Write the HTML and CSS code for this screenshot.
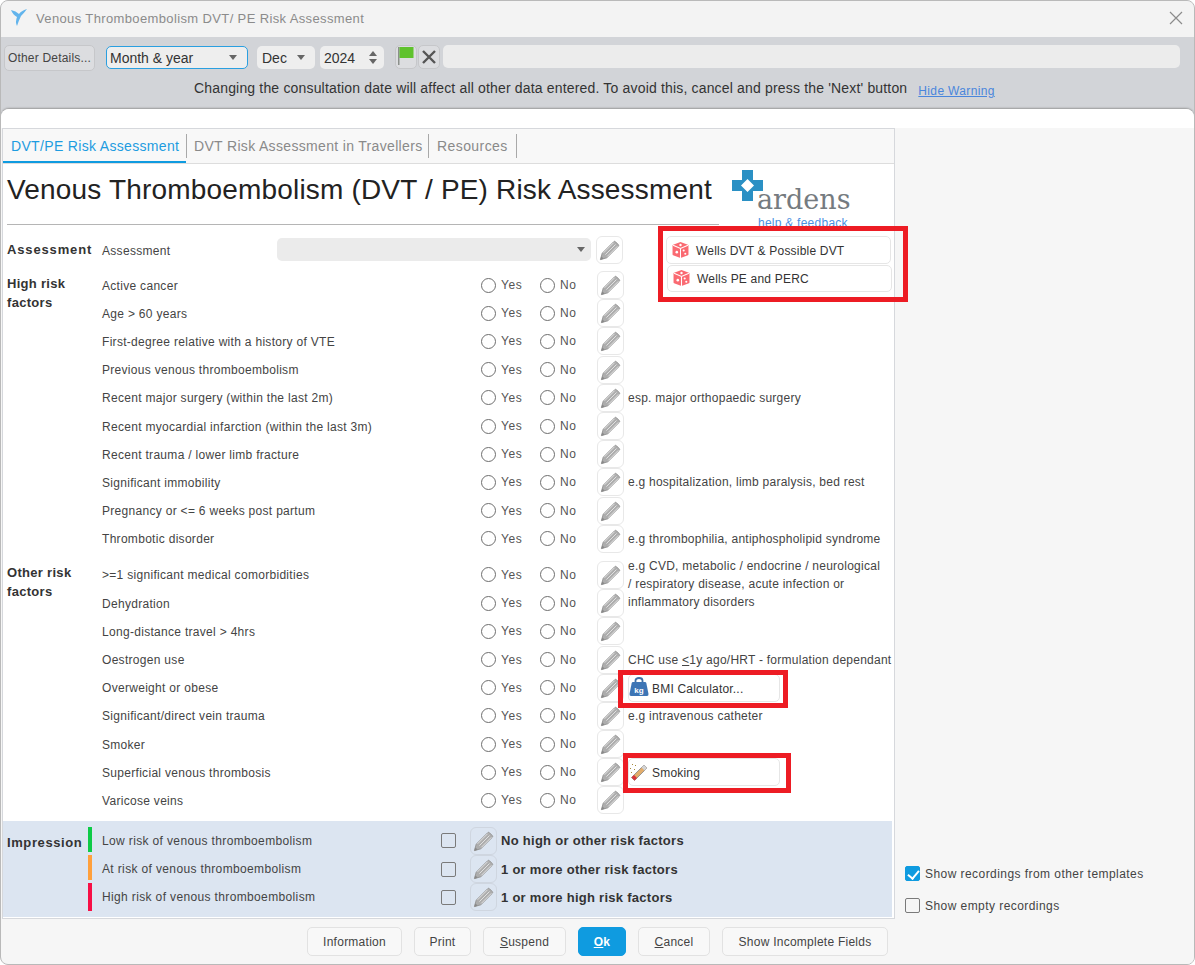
FILE: index.html
```html
<!DOCTYPE html>
<html lang="en">
<head>
    <meta charset="UTF-8">
    <title>Venous Thromboembolism DVT/ PE Risk Assessment</title>
    <link rel="stylesheet" href="styles.css">
</head>
<body>
    <svg class="defs" width="0" height="0">
        <symbol id="pencil" viewBox="0 0 24 24">
            <path d="M1.5 22.5 L3.5 15.5 L16 3 Q17 2 18 3 L21 6 Q22 7 21 8 L8.5 20.5 Z" fill="#adadad" stroke="#949494" stroke-width="1"/>
            <path d="M5 15 L16 4 M7 17 L18 6 M9 19 L20 8" stroke="#e6e6e6" stroke-width="1" fill="none"/>
            <path d="M1.5 22.5 L2.5 18.8 L5.2 21.5 Z" fill="#8a8a8a"/>
        </symbol>
        <symbol id="dice" viewBox="0 0 16 16">
            <path d="M8 .5 L15 3 Q15.5 3.2 15.5 4 V12 Q15.5 12.8 15 13 L8 15.5 L1 13 Q.5 12.8 .5 12 V4 Q.5 3.2 1 3 Z" fill="#fa6a72"/>
            <path d="M1 3.5 L8 6.5 L15 3.5 M8 6.5 V15.5" stroke="#fff" stroke-width="1" fill="none"/>
            <circle cx="4.5" cy="10" r="1.2" fill="#fff"/>
            <circle cx="11" cy="8.5" r="1" fill="#fff"/>
            <circle cx="12.5" cy="11.5" r="1" fill="#fff"/>
            <circle cx="8" cy="3.3" r="1.1" fill="#fff"/>
        </symbol>
    </svg>

    <div class="window">
        <!-- title bar -->
        <div class="titlebar">
            <svg class="app-icon" width="18" height="20" viewBox="0 0 18 20">
                <path d="M1 2 Q6 3 9 6 Q11 3 17 1 Q14 5 11 8 Q9 12 7 18 Q5 14 7 9 Q3 7 1 2 Z" fill="#62b4ec"/>
            </svg>
            <span class="title">Venous Thromboembolism DVT/ PE Risk Assessment</span>
            <svg class="close" width="14" height="14" viewBox="0 0 14 14">
                <path d="M1 1 L13 13 M13 1 L1 13" stroke="#8b8b8b" stroke-width="1.2"/>
            </svg>
        </div>

        <!-- date toolbar -->
        <div class="toolbar">
            <div class="tool-row">
                <button class="other-btn">Other Details...</button>
                <div class="drop month">Month &amp; year<i class="caret"></i></div>
                <div class="drop dec">Dec<i class="caret"></i></div>
                <div class="drop year">2024
                    <span class="spin"><i class="spin-up"></i><i class="spin-down"></i></span>
                </div>
                <button class="icon-btn flag">
                    <svg width="16" height="18" viewBox="0 0 16 18">
                        <rect x="0" y="0" width="1.5" height="18" fill="#8a8f8a"/>
                        <rect x="1.5" y="0" width="14" height="11" fill="#5fc22d"/>
                    </svg>
                </button>
                <button class="icon-btn cross">
                    <svg width="14" height="14" viewBox="0 0 14 14">
                        <path d="M1 1 L13 13 M13 1 L1 13" stroke="#555" stroke-width="2.4"/>
                    </svg>
                </button>
                <div class="date-text"></div>
            </div>
            <div class="warn-row">
                <span class="warn">Changing the consultation date will affect all other data entered. To avoid this, cancel and press the 'Next' button</span>
                <a class="hide-warn">Hide Warning</a>
            </div>
        </div>

        <div class="content">
            <div class="strip"></div>
            <div class="columns">
                <div class="left-col">
                    <div class="panel">
                        <div class="tabs">
                            <span class="tab tab-active">DVT/PE Risk Assessment</span>
                            <span class="tab tab-two">DVT Risk Assessment in Travellers</span>
                            <span class="tab tab-three">Resources</span>
                        </div>

                        <div class="head">
                            <h1>Venous Thromboembolism (DVT / PE) Risk Assessment</h1>
                            <div class="logo">
                                <svg class="logo-cross" width="33" height="33" viewBox="0 0 33 33">
                                    <path d="M11 1 H22 V11 H32 V22 H22 V32 H11 V22 H1 V11 H11 Z M10 16.5 L16.5 23 L23 16.5 L16.5 10 Z" fill="#2a90c4" fill-rule="evenodd"/>
                                </svg>
                                <span class="logo-word">ardens</span>
                                <span class="logo-help">help &amp; feedback</span>
                            </div>
                        </div>

                        <!-- assessment -->
                        <div class="section sec-assess">
                            <div class="sec-label assess-label">Assessment</div>
                            <div class="rows">
                                <div class="row">
                                    <span class="row-label assess-name">Assessment</span>
                                    <div class="assess-drop"><i class="caret"></i></div>
                                    <button class="pencil"><svg width="22" height="22"><use href="#pencil"/></svg></button>
                                    <button class="side-btn wells"><svg width="17" height="18"><use href="#dice"/></svg>Wells DVT &amp; Possible DVT</button>
                                </div>
                            </div>
                        </div>

                        <!-- high risk -->
                        <div class="section sec-high">
                            <div class="sec-label">High risk<br>factors</div>
                            <div class="rows">
                                <div class="row">
                                    <span class="row-label">Active cancer</span>
                                    <label class="opt"><input type="radio" name="h1">Yes</label>
                                    <label class="opt opt-no"><input type="radio" name="h1">No</label>
                                    <button class="pencil"><svg width="22" height="22"><use href="#pencil"/></svg></button>
                                    <button class="side-btn wells wells-two"><svg width="17" height="18"><use href="#dice"/></svg>Wells PE and PERC</button>
                                </div>
                                <div class="row">
                                    <span class="row-label">Age &gt; 60 years</span>
                                    <label class="opt"><input type="radio" name="h2">Yes</label>
                                    <label class="opt opt-no"><input type="radio" name="h2">No</label>
                                    <button class="pencil"><svg width="22" height="22"><use href="#pencil"/></svg></button>
                                </div>
                                <div class="row">
                                    <span class="row-label">First-degree relative with a history of VTE</span>
                                    <label class="opt"><input type="radio" name="h3">Yes</label>
                                    <label class="opt opt-no"><input type="radio" name="h3">No</label>
                                    <button class="pencil"><svg width="22" height="22"><use href="#pencil"/></svg></button>
                                </div>
                                <div class="row">
                                    <span class="row-label">Previous venous thromboembolism</span>
                                    <label class="opt"><input type="radio" name="h4">Yes</label>
                                    <label class="opt opt-no"><input type="radio" name="h4">No</label>
                                    <button class="pencil"><svg width="22" height="22"><use href="#pencil"/></svg></button>
                                </div>
                                <div class="row">
                                    <span class="row-label">Recent major surgery (within the last 2m)</span>
                                    <label class="opt"><input type="radio" name="h5">Yes</label>
                                    <label class="opt opt-no"><input type="radio" name="h5">No</label>
                                    <button class="pencil"><svg width="22" height="22"><use href="#pencil"/></svg></button>
                                    <span class="note">esp. major orthopaedic surgery</span>
                                </div>
                                <div class="row">
                                    <span class="row-label">Recent myocardial infarction (within the last 3m)</span>
                                    <label class="opt"><input type="radio" name="h6">Yes</label>
                                    <label class="opt opt-no"><input type="radio" name="h6">No</label>
                                    <button class="pencil"><svg width="22" height="22"><use href="#pencil"/></svg></button>
                                </div>
                                <div class="row">
                                    <span class="row-label">Recent trauma / lower limb fracture</span>
                                    <label class="opt"><input type="radio" name="h7">Yes</label>
                                    <label class="opt opt-no"><input type="radio" name="h7">No</label>
                                    <button class="pencil"><svg width="22" height="22"><use href="#pencil"/></svg></button>
                                </div>
                                <div class="row">
                                    <span class="row-label">Significant immobility</span>
                                    <label class="opt"><input type="radio" name="h8">Yes</label>
                                    <label class="opt opt-no"><input type="radio" name="h8">No</label>
                                    <button class="pencil"><svg width="22" height="22"><use href="#pencil"/></svg></button>
                                    <span class="note">e.g hospitalization, limb paralysis, bed rest</span>
                                </div>
                                <div class="row">
                                    <span class="row-label">Pregnancy or &lt;= 6 weeks post partum</span>
                                    <label class="opt"><input type="radio" name="h9">Yes</label>
                                    <label class="opt opt-no"><input type="radio" name="h9">No</label>
                                    <button class="pencil"><svg width="22" height="22"><use href="#pencil"/></svg></button>
                                </div>
                                <div class="row">
                                    <span class="row-label">Thrombotic disorder</span>
                                    <label class="opt"><input type="radio" name="h10">Yes</label>
                                    <label class="opt opt-no"><input type="radio" name="h10">No</label>
                                    <button class="pencil"><svg width="22" height="22"><use href="#pencil"/></svg></button>
                                    <span class="note">e.g thrombophilia, antiphospholipid syndrome</span>
                                </div>
                            </div>
                        </div>

                        <!-- other risk -->
                        <div class="section sec-other">
                            <div class="sec-label other-label">Other risk<br>factors</div>
                            <div class="rows">
                                <div class="row">
                                    <span class="row-label">&gt;=1 significant medical comorbidities</span>
                                    <label class="opt"><input type="radio" name="o1">Yes</label>
                                    <label class="opt opt-no"><input type="radio" name="o1">No</label>
                                    <button class="pencil"><svg width="22" height="22"><use href="#pencil"/></svg></button>
                                    <span class="note note-long">e.g CVD, metabolic / endocrine / neurological<br>/ respiratory disease, acute infection or<br>inflammatory disorders</span>
                                </div>
                                <div class="row">
                                    <span class="row-label">Dehydration</span>
                                    <label class="opt"><input type="radio" name="o2">Yes</label>
                                    <label class="opt opt-no"><input type="radio" name="o2">No</label>
                                    <button class="pencil"><svg width="22" height="22"><use href="#pencil"/></svg></button>
                                </div>
                                <div class="row">
                                    <span class="row-label">Long-distance travel &gt; 4hrs</span>
                                    <label class="opt"><input type="radio" name="o3">Yes</label>
                                    <label class="opt opt-no"><input type="radio" name="o3">No</label>
                                    <button class="pencil"><svg width="22" height="22"><use href="#pencil"/></svg></button>
                                </div>
                                <div class="row">
                                    <span class="row-label">Oestrogen use</span>
                                    <label class="opt"><input type="radio" name="o4">Yes</label>
                                    <label class="opt opt-no"><input type="radio" name="o4">No</label>
                                    <button class="pencil"><svg width="22" height="22"><use href="#pencil"/></svg></button>
                                    <span class="note">CHC use <u>&lt;</u>1y ago/HRT - formulation dependant</span>
                                </div>
                                <div class="row">
                                    <span class="row-label">Overweight or obese</span>
                                    <label class="opt"><input type="radio" name="o5">Yes</label>
                                    <label class="opt opt-no"><input type="radio" name="o5">No</label>
                                    <button class="pencil"><svg width="22" height="22"><use href="#pencil"/></svg></button>
                                    <button class="side-btn calc">
                                        <svg width="20" height="20" viewBox="0 0 20 20">
                                            <path d="M6.5 6 V3.5 Q6.5 1 10 1 Q13.5 1 13.5 3.5 V6" fill="none" stroke="#3d6fa8" stroke-width="1.8"/>
                                            <path d="M4 5 H16 Q17 5 17.3 6 L19.5 17 Q19.7 19 18 19 H2 Q.3 19 .5 17 L2.7 6 Q3 5 4 5 Z" fill="#3d75b5"/>
                                            <text x="10" y="15.5" class="kg">kg</text>
                                        </svg>BMI Calculator...
                                    </button>
                                </div>
                                <div class="row">
                                    <span class="row-label">Significant/direct vein trauma</span>
                                    <label class="opt"><input type="radio" name="o6">Yes</label>
                                    <label class="opt opt-no"><input type="radio" name="o6">No</label>
                                    <button class="pencil"><svg width="22" height="22"><use href="#pencil"/></svg></button>
                                    <span class="note">e.g intravenous catheter</span>
                                </div>
                                <div class="row">
                                    <span class="row-label">Smoker</span>
                                    <label class="opt"><input type="radio" name="o7">Yes</label>
                                    <label class="opt opt-no"><input type="radio" name="o7">No</label>
                                    <button class="pencil"><svg width="22" height="22"><use href="#pencil"/></svg></button>
                                </div>
                                <div class="row">
                                    <span class="row-label">Superficial venous thrombosis</span>
                                    <label class="opt"><input type="radio" name="o8">Yes</label>
                                    <label class="opt opt-no"><input type="radio" name="o8">No</label>
                                    <button class="pencil"><svg width="22" height="22"><use href="#pencil"/></svg></button>
                                    <button class="side-btn calc">
                                        <svg width="20" height="20" viewBox="0 0 20 20">
                                            <path d="M2.5 15.5 L15 3 L18 6 L5.5 18.5 Z" fill="#e2ad6c" stroke="#8d8d8d" stroke-width=".9"/>
                                            <path d="M2.5 15.5 L5 13 L8 16 L5.5 18.5 Z" fill="#d9343a"/>
                                            <path d="M12.5 5.5 L15 3 L18 6 L15.5 8.5 Z" fill="#d4d4d4"/>
                                            <path d="M3 2 L4 3 M1 6 L2 7 M5 7 L6 8 M2 10 L3 11 M6 3 L7 4" stroke="#a78b3e" stroke-width="1"/>
                                        </svg>Smoking
                                    </button>
                                </div>
                                <div class="row">
                                    <span class="row-label">Varicose veins</span>
                                    <label class="opt"><input type="radio" name="o9">Yes</label>
                                    <label class="opt opt-no"><input type="radio" name="o9">No</label>
                                    <button class="pencil"><svg width="22" height="22"><use href="#pencil"/></svg></button>
                                </div>
                            </div>
                        </div>

                        <!-- impression -->
                        <div class="section sec-impression">
                            <div class="sec-label impression-label">Impression</div>
                            <div class="rows">
                                <div class="row">
                                    <i class="bar bar-green"></i>
                                    <span class="imp-label">Low risk of venous thromboembolism</span>
                                    <input class="check" type="checkbox">
                                    <button class="pencil imp-pencil"><svg width="22" height="22"><use href="#pencil"/></svg></button>
                                    <b class="imp-note">No high or other risk factors</b>
                                </div>
                                <div class="row">
                                    <i class="bar bar-orange"></i>
                                    <span class="imp-label">At risk of venous thromboembolism</span>
                                    <input class="check" type="checkbox">
                                    <button class="pencil imp-pencil"><svg width="22" height="22"><use href="#pencil"/></svg></button>
                                    <b class="imp-note">1 or more other risk factors</b>
                                </div>
                                <div class="row">
                                    <i class="bar bar-red"></i>
                                    <span class="imp-label">High risk of venous thromboembolism</span>
                                    <input class="check" type="checkbox">
                                    <button class="pencil imp-pencil"><svg width="22" height="22"><use href="#pencil"/></svg></button>
                                    <b class="imp-note">1 or more high risk factors</b>
                                </div>
                            </div>
                        </div>
                    </div>

                    <div class="footer">
                        <button class="btn btn-info">Information</button>
                        <button class="btn btn-print">Print</button>
                        <button class="btn btn-suspend"><u>S</u>uspend</button>
                        <button class="btn btn-ok"><u>O</u>k</button>
                        <button class="btn btn-cancel"><u>C</u>ancel</button>
                        <button class="btn btn-show">Show Incomplete Fields</button>
                    </div>
                </div>

                <div class="right-col">
                    <label class="side-check"><input class="check" type="checkbox" checked>Show recordings from other templates</label>
                    <label class="side-check"><input class="check" type="checkbox">Show empty recordings</label>
                </div>
            </div>
        </div>

        <!-- red annotation boxes -->
        <div class="mark mark-wells"></div>
        <div class="mark mark-bmi"></div>
        <div class="mark mark-smoking"></div>
    </div>
</body>
</html>
```

FILE: styles.css
```css
* {
    margin: 0;
    padding: 0;
    box-sizing: border-box;
}

html, body {
    height: 965px;
    overflow: hidden;
    background: #fff;
    font-family: "Liberation Sans", Arial, sans-serif;
    font-size: 12px;
    color: #444;
}

.defs {
    position: absolute;
}

button {
    font-family: inherit;
    font-size: 12px;
    color: #444;
    background: #fff;
}

.window {
    position: relative;
    width: 1195px;
    height: 965px;
    border: 1px solid #b9b9b9;
    border-radius: 8px;
    display: flex;
    flex-direction: column;
    overflow: hidden;
    background: #d2d4d8;
}

/* title bar */

.titlebar {
    height: 36px;
    flex: none;
    display: flex;
    align-items: center;
    background: #f3f3f3;
    padding-left: 9px;
}

.app-icon {
    margin-bottom: 2px;
}

.title {
    margin-left: 8px;
    margin-bottom: 2px;
    color: #8b8b8b;
    font-size: 13px;
    letter-spacing: 0.37px;
}

.close {
    margin-left: auto;
    margin-right: 11px;
    margin-bottom: 3px;
}

/* toolbar */

.toolbar {
    height: 72px;
    flex: none;
    background: #d2d4d8;
    padding: 8px 0 0 3px;
}

.tool-row {
    display: flex;
    align-items: flex-start;
}

.other-btn {
    width: 91px;
    height: 26px;
    background: #dcdde0;
    border: 1px solid #c6c7ca;
    border-radius: 5px;
    color: #444;
    font-size: 12px;
    letter-spacing: 0.2px;
    white-space: nowrap;
}

.drop {
    height: 23px;
    margin-top: 1px;
    display: flex;
    align-items: center;
    padding-left: 5px;
    background: #eeeeee;
    border-radius: 5px;
    font-size: 14px;
    color: #333;
}

.month {
    width: 142px;
    margin-left: 11px;
    border: 1px solid #2a9fe0;
    padding-left: 3px;
}

.dec {
    width: 58px;
    margin-left: 9px;
}

.year {
    width: 64px;
    margin-left: 5px;
    padding-left: 4px;
}

.caret {
    display: block;
    width: 0;
    height: 0;
    margin-left: auto;
    margin-right: 10px;
    border-left: 4.5px solid transparent;
    border-right: 4.5px solid transparent;
    border-top: 5px solid #666;
}

.spin {
    display: flex;
    flex-direction: column;
    gap: 3px;
    margin-left: auto;
    margin-right: 7px;
}

.spin-up, .spin-down {
    display: block;
    width: 0;
    height: 0;
    border-left: 4.5px solid transparent;
    border-right: 4.5px solid transparent;
}

.spin-up {
    border-bottom: 5px solid #666;
}

.spin-down {
    border-top: 5px solid #666;
}

.icon-btn {
    height: 24px;
    background: #dcdde0;
    border: 1px solid #c6c7ca;
    border-radius: 5px;
    display: flex;
    align-items: center;
    justify-content: center;
}

.flag {
    width: 22px;
    margin-left: 11px;
    align-items: flex-start;
    padding-top: 1px;
}

.cross {
    width: 22px;
    margin-left: 1px;
}

.date-text {
    width: 737px;
    height: 23px;
    margin-left: 3px;
    background: #ececec;
    border-radius: 5px;
}

.warn-row {
    display: flex;
    align-items: flex-start;
    margin-top: 8px;
    padding-left: 190px;
}

.warn {
    font-size: 14px;
    line-height: 18px;
    color: #333;
    letter-spacing: 0.17px;
}

.hide-warn {
    margin-left: 11px;
    margin-top: 5px;
    color: #4a86dc;
    font-size: 12px;
    line-height: 14px;
    letter-spacing: 0.35px;
    text-decoration: underline;
}

/* main area */

.content {
    flex: 1;
    display: flex;
    flex-direction: column;
    min-height: 0;
    background: #f6f6f6;
    border-radius: 8px 8px 0 0;
    box-shadow: 0 -1px 2px #9a9a9a;
}

.strip {
    height: 19px;
    flex: none;
    background: #fff;
    border-radius: 8px 8px 0 0;
}

.columns {
    flex: 1;
    display: flex;
    min-height: 0;
}

.left-col {
    width: 894px;
    flex: none;
    display: flex;
    flex-direction: column;
}

.panel {
    height: 791px;
    flex: none;
    margin-left: 1px;
    background: #fff;
    border: 1px solid #d6d8dc;
}

/* tabs */

.tabs {
    height: 35px;
    display: flex;
    align-items: center;
    background: #f8f8f8;
    border-bottom: 1px solid #dddddd;
}

.tab {
    height: 24px;
    line-height: 24px;
    border-right: 1px solid #a9a9a9;
    color: #8a8a8a;
    font-size: 14px;
    letter-spacing: 0.33px;
    white-space: nowrap;
}

.tab-active {
    width: 183px;
    padding-left: 8px;
    color: #1e9ce0;
    height: 34px;
    line-height: 35px;
    border-right: 0;
    border-bottom: 2px solid #0f9be0;
}

.tab-two {
    width: 243px;
    padding-left: 7px;
    border-left: 1px solid #a9a9a9;
}

.tab-three {
    width: 88px;
    padding-left: 8px;
    letter-spacing: 0.42px;
}

/* heading */

.head {
    height: 61px;
    display: flex;
}

h1 {
    width: 712px;
    height: 61px;
    margin-left: 4px;
    border-bottom: 1px solid #b5b5b5;
    font-size: 28px;
    font-weight: normal;
    line-height: 52px;
    letter-spacing: 0.18px;
    color: #222;
    white-space: nowrap;
}

.logo {
    width: 126px;
    margin-left: 12px;
    display: flex;
    flex-direction: column;
}

.logo-cross {
    margin-top: 5px;
    flex: none;
}

.logo-word {
    margin: -17px 0 0 26px;
    font-family: "DejaVu Serif", serif;
    font-size: 27px;
    line-height: 30px;
    color: #757b80;
}

.logo-help {
    margin: 2px 0 0 27px;
    font-size: 12px;
    line-height: 12px;
    color: #4a90e2;
    letter-spacing: 0.25px;
    white-space: nowrap;
}

/* form sections */

.section {
    display: flex;
}

.sec-label {
    width: 99px;
    flex: none;
    padding: 3px 0 0 4px;
    font-size: 13px;
    font-weight: bold;
    line-height: 19px;
    letter-spacing: 0.3px;
    color: #333;
}

.sec-assess {
    margin-top: 11px;
}

.sec-high {
    margin-top: 6.8px;
}

.sec-other {
    margin-top: 8px;
}

.assess-label {
    padding-top: 4px;
    letter-spacing: 0.85px;
}

.other-label {
    padding-top: 2px;
}

.row {
    height: 28.2px;
    display: flex;
    align-items: center;
    white-space: nowrap;
}

.row-label {
    width: 379px;
    flex: none;
    padding-top: 1px;
    letter-spacing: 0.3px;
}

.assess-name {
    width: 175px;
}

.assess-drop {
    width: 314px;
    height: 23px;
    margin-right: 5px;
    margin-bottom: 2px;
    background: #ebebeb;
    border-radius: 5px;
    display: flex;
    align-items: center;
}

.assess-drop .caret {
    margin-right: 6px;
}

.opt {
    width: 59px;
    flex: none;
    display: flex;
    align-items: center;
    color: #555;
    letter-spacing: 0.6px;
}

.opt-no {
    width: 57px;
}

.opt input {
    appearance: none;
    width: 15px;
    height: 15px;
    margin-right: 5px;
    border: 1.5px solid #6e6e6e;
    border-radius: 50%;
    background: #fff;
}

.pencil {
    width: 27px;
    height: 28px;
    flex: none;
    border: 1px solid #e8e8e8;
    border-radius: 6px;
    display: flex;
    align-items: center;
    justify-content: center;
}

.note {
    margin-left: 4px;
    letter-spacing: 0.25px;
}

.note-long {
    align-self: flex-start;
    margin-top: -4px;
    line-height: 18px;
}

.side-btn {
    height: 28px;
    display: flex;
    align-items: center;
    padding-top: 2px;
    border: 1px solid #e6e6e6;
    border-radius: 5px;
    letter-spacing: 0.2px;
    color: #333;
    white-space: nowrap;
}

.side-btn svg {
    margin-top: -3px;
}

.wells {
    width: 225px;
    margin-left: 43px;
    padding-left: 5px;
    gap: 7px;
}

.wells-two {
    align-self: flex-start;
    margin-top: -6px;
    height: 27px;
}

.calc {
    width: 152px;
    margin-left: 4px;
    padding-left: 0;
    gap: 3px;
}

.kg {
    font-size: 8px;
    font-weight: bold;
    fill: #fff;
    text-anchor: middle;
}

/* impression */

.sec-impression {
    margin-top: 6.2px;
    margin-right: 2px;
    height: 96px;
    padding-top: 6px;
    background: #dce5f1;
}

.impression-label {
    width: 85px;
    padding-top: 6px;
    letter-spacing: 0.6px;
}

.bar {
    display: block;
    width: 4px;
    height: 25px;
    margin-right: 10px;
    margin-bottom: 3px;
    flex: none;
}

.bar-green {
    background: #0ecb47;
}

.bar-orange {
    background: #ffa03c;
}

.bar-red {
    height: 28px;
    margin-bottom: 0;
    background: #f70f45;
}

.imp-label {
    width: 339px;
    flex: none;
    letter-spacing: 0.36px;
}

.check {
    appearance: none;
    width: 15px;
    height: 15px;
    flex: none;
    border: 1.5px solid #7a7a7a;
    border-radius: 2px;
    background: transparent;
    position: relative;
}

.check:checked {
    background: #0f9be0;
    border-color: #0f9be0;
}

.check:checked::after {
    content: "";
    position: absolute;
    left: 3.5px;
    top: 0.5px;
    width: 5px;
    height: 9px;
    border-right: 2px solid #fff;
    border-bottom: 2px solid #fff;
    transform: rotate(40deg);
}

.imp-pencil {
    margin-left: 14px;
    background: #dce5f1;
    border-color: #cfd6e0;
}

.imp-note {
    margin-left: 4px;
    font-size: 13px;
    color: #333;
    letter-spacing: 0.28px;
}

/* footer buttons */

.footer {
    display: flex;
    gap: 12px;
    padding: 8px 0 0 306px;
}

.btn {
    height: 29px;
    background: #f8f8f8;
    border: 1px solid #e2e2e2;
    border-radius: 5px;
    letter-spacing: 0.25px;
    color: #444;
}

.btn-info { width: 95px; }
.btn-print { width: 57px; }
.btn-suspend { width: 83px; }
.btn-cancel { width: 72px; }
.btn-show { width: 166px; }

.btn-ok {
    width: 48px;
    background: #0f9be0;
    border-color: #0f9be0;
    color: #fff;
    font-weight: bold;
}

/* right column */

.right-col {
    flex: 1;
    display: flex;
    flex-direction: column;
    justify-content: flex-end;
    gap: 17px;
    padding: 0 0 51px 10px;
    background: #f6f6f6;
}

.side-check {
    display: flex;
    align-items: center;
    gap: 5px;
    letter-spacing: 0.44px;
    color: #444;
}

/* red annotation boxes */

.mark {
    position: absolute;
    border: 5px solid #ed1c24;
    pointer-events: none;
}

.mark-wells {
    left: 657px;
    top: 225px;
    width: 250px;
    height: 76px;
}

.mark-bmi {
    left: 617px;
    top: 669px;
    width: 170px;
    height: 38px;
}

.mark-smoking {
    left: 622px;
    top: 752px;
    width: 168px;
    height: 40px;
}
```
